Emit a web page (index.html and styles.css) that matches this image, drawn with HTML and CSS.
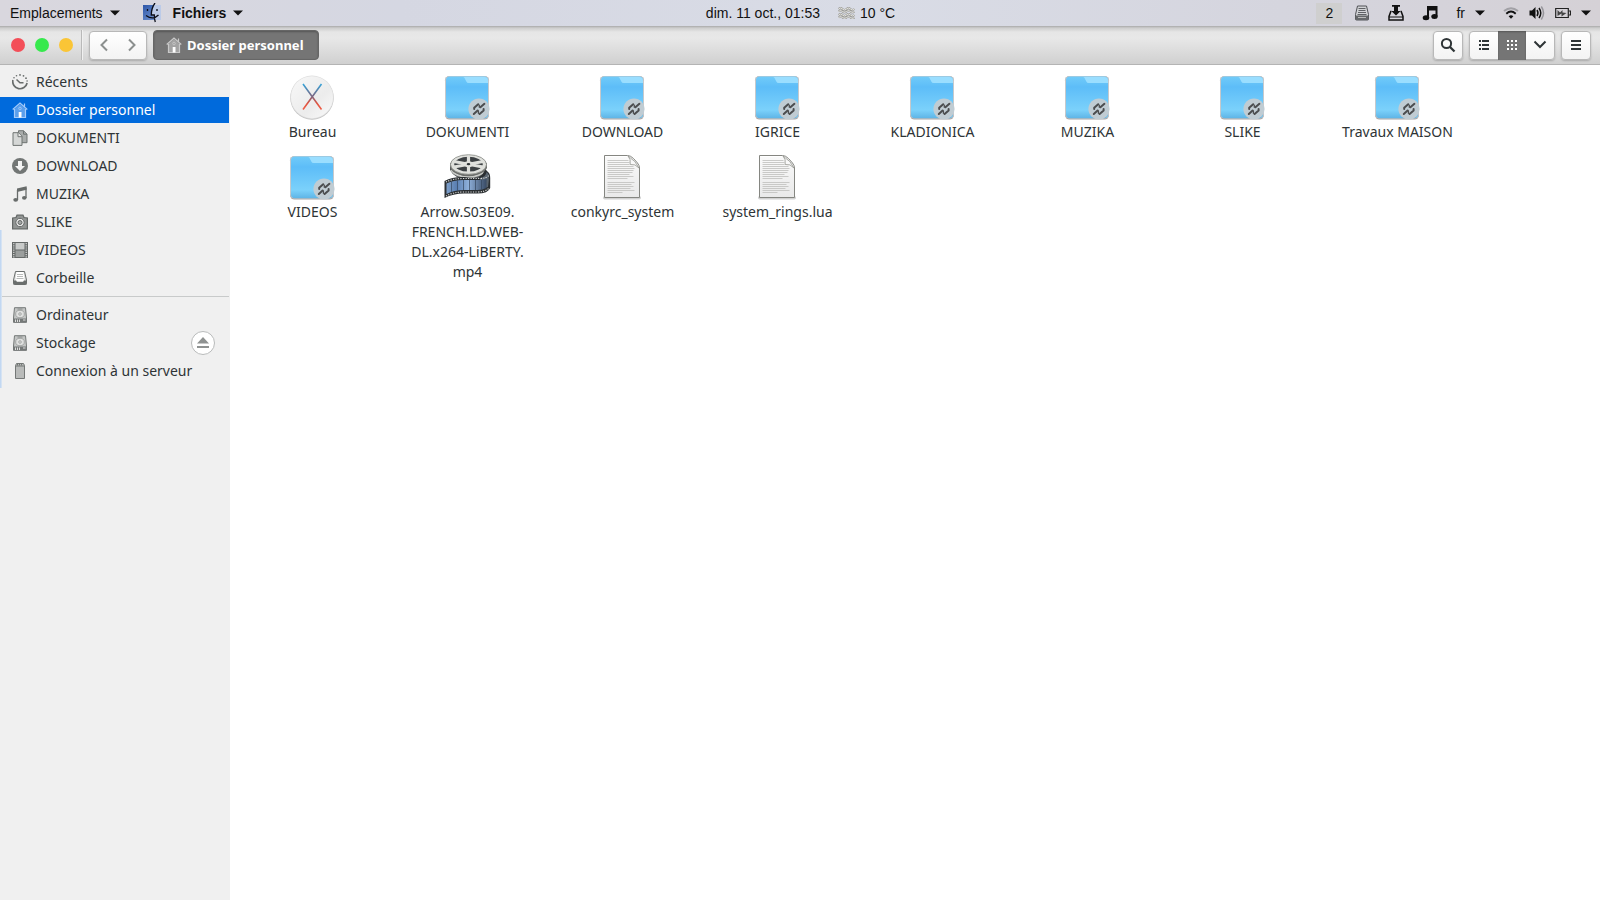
FILE: index.html
```
<!DOCTYPE html>
<html lang="fr">
<head>
<meta charset="utf-8">
<title>Dossier personnel</title>
<link rel="stylesheet" href="styles.css">
</head>
<body>
<svg class="defs" aria-hidden="true">
  <defs>
    <linearGradient id="g-folder" x1="0" y1="0" x2="0" y2="1">
      <stop offset="0" stop-color="#71cbf9"/><stop offset=".25" stop-color="#5dbdf8"/><stop offset=".8" stop-color="#7bd1fb"/><stop offset="1" stop-color="#5eb4e6"/>
    </linearGradient>
    <linearGradient id="g-x" gradientUnits="userSpaceOnUse" x1="0" y1="10" x2="0" y2="37">
      <stop offset="0" stop-color="#2fa8e0"/><stop offset=".5" stop-color="#7d6580"/><stop offset=".75" stop-color="#e0533f"/><stop offset="1" stop-color="#f0604a"/>
    </linearGradient>
    <linearGradient id="g-disc" x1="0" y1="0" x2="1" y2="1">
      <stop offset="0" stop-color="#f8f8f8"/><stop offset=".6" stop-color="#ececec"/><stop offset="1" stop-color="#fafafa"/>
    </linearGradient>
    <linearGradient id="g-page" x1="0" y1="0" x2="0" y2="1">
      <stop offset="0" stop-color="#fafafa"/><stop offset="1" stop-color="#e9e9e9"/>
    </linearGradient>
    <linearGradient id="g-film" x1="0" y1="0" x2="1" y2="0">
      <stop offset="0" stop-color="#7e9fc9"/><stop offset=".25" stop-color="#5a7fb2"/><stop offset=".55" stop-color="#8fb0da"/><stop offset="1" stop-color="#384a64"/>
    </linearGradient>
    <linearGradient id="g-finder" x1="0" y1="0" x2="1" y2="1">
      <stop offset="0" stop-color="#2c56a8"/><stop offset="1" stop-color="#7fa0d8"/>
    </linearGradient>
  </defs>
  <symbol id="i-folder" viewBox="0 0 48 48">
    <rect x="2" y="3" width="44" height="43.500" rx="4.500" fill="#a9a6a6"/>
    <rect x="2" y="3" width="44" height="42.500" rx="4.500" fill="#c6c9cc"/>
    <rect x="3" y="3.600" width="42" height="41.700" rx="3.800" fill="url(#g-folder)"/>
    <path d="M20 4h21.500a3.500 3.500 0 0 1 3.500 3.500V10H25.500q-1.500 0-2.200-1.500L21.500 5Q21 4 20 4z" fill="#9adeff"/>
    <circle cx="36" cy="36" r="10.600" fill="#c0ccd3"/>
    <g fill="none" stroke="#4b4d4f" stroke-width="2" stroke-linecap="round" stroke-linejoin="round">
      <path d="M31.200 36v-1.200l4-3.600M37.400 34.300l4-3.500M30.800 41l3.800-3.500M36.600 41l4-3.600V36"/>
      <path d="M36.300 32.200v2M35.400 38v2.300" stroke-width="1.300"/>
    </g>
  </symbol>
  <symbol id="i-desktop" viewBox="0 0 48 48">
    <circle cx="24" cy="25" r="21.700" fill="#c2c2c2"/>
    <circle cx="24" cy="24.200" r="21.700" fill="#dedede"/>
    <circle cx="24" cy="24.200" r="21" fill="url(#g-disc)"/>
    <path d="M15 11l18.500 25.500M33.500 11L15 36.500" stroke="url(#g-x)" stroke-width="1.600" fill="none"/>
  </symbol>
  <symbol id="i-page" viewBox="0 0 48 48">
    <rect x="5" y="43" width="38" height="3.500" rx="1.700" fill="#000" opacity=".18"/>
    <path d="M6.500 2.500h23q3 0 6 3l4 4.500q2 2.500 2 5V44.500h-35z" fill="url(#g-page)" stroke="#858681"/>
    <path d="M7.500 3.500h22" stroke="#fff"/>
    <path d="M9.500 7.500h21M9.500 9.500h22M9.500 11.500h22M9.500 13.500h26M9.500 15.500h27M9.500 17.500h26M9.500 19.500h25M9.500 21.500h22M9.500 23.500h26M9.500 25.500h20M9.500 29.500h27M9.500 31.500h24M9.500 33.500h26M9.500 35.500h23M9.500 37.500h27M9.500 39.500h15" stroke="#c4c4c2" stroke-width=".9"/>
    <path d="M30 3q3 3 2.200 8.500 5-1 8.800 3.500Q38 8 30 3z" fill="#f9f9f9" stroke="#94958f" stroke-width=".8"/>
  </symbol>
  <symbol id="i-film" viewBox="0 0 48 48">
    <path d="M7 10v7q5 10 20 9 9 0 14-4l3-8V10z" fill="#55585a"/>
    <path d="M8 17q5 7 18 7 10 0 17-7" fill="none" stroke="#c9cbc7" stroke-width="2"/>
    <path d="M36 24q5-3 6-8l4 4q1.500 2 1.200 8v7q-2 5.500-13 5.500H21q-11 0-19.500 4.500V28q8-4.500 20-4 15 2 14.500 0z" fill="#2b2f32"/>
    <path d="M37 25q6-1 6.500-6l2 2q1 6-.5 13l-8 2z" fill="#59646f"/>
    <path d="M3.500 30.500q7-3.500 17-3.500h18l5-1v9q-4 2-9 2H21q-10 0-17.500 4z" fill="url(#g-film)"/>
    <path d="M3 29q7-3.500 18-3.500h16q7 0 9-3.500M3 43q7-4 18-4h13q9 0 12-4" fill="none" stroke="#dcdddb" stroke-width="1.100" stroke-dasharray="1.200 1.300"/>
    <path d="M8.500 29v10M14.500 27.500v10.500M20.500 27v10M26.500 27v10M32.500 27v10M38.500 27v9.500" stroke="#34455c" stroke-width=".7"/>
    <ellipse cx="25.500" cy="12.700" rx="18.500" ry="10.500" fill="#6b6d6a"/>
    <ellipse cx="25.500" cy="11.500" rx="18" ry="9.800" fill="#dfe0dc" stroke="#888a85" stroke-width=".8"/>
    <ellipse cx="25.500" cy="11.200" rx="14.200" ry="7.400" fill="#3c4043"/>
    <path d="M11 8.500L40 14M40 8.500L11 14M25.500 3v17" stroke="#dfe0dc" stroke-width="3.200"/>
    <ellipse cx="25.500" cy="11.200" rx="5" ry="3" fill="#dfe0dc"/>
    <ellipse cx="25.500" cy="11.200" rx="1.800" ry="1.100" fill="#2d3133"/>
  </symbol>
  <symbol id="i-home" viewBox="0 0 16 16">
    <path d="M2.500 7v8.500h11V7L8 2z" fill="currentColor" opacity=".55"/>
    <path d="M.7 7.500L8 1l7.300 6.500M12.500 4.500V1.500M2.500 7v8.500h11V7" fill="none" stroke="currentColor" stroke-width="1.200"/>
    <circle cx="8" cy="6.500" r="1.300" fill="none" stroke="currentColor" stroke-width=".8"/>
    <path d="M6.700 10h2.800v5.500H6.700z" fill="#fff"/>
  </symbol>
  <symbol id="i-recent" viewBox="0 0 16 16">
    <path d="M.9 6A7.200 7.200 0 1 0 15.100 9" fill="none" stroke="currentColor" stroke-width="1.700"/>
    <path d="M4.500 5.500L8 8.700h3.500" fill="none" stroke="currentColor" stroke-width="1.500"/>
    <g fill="currentColor"><circle cx="4.500" cy="1.800" r=".8"/><circle cx="8" cy=".9" r=".9"/><circle cx="11.500" cy="1.800" r=".9"/><circle cx="14" cy="4.200" r=".9"/><circle cx="15.100" cy="7" r=".8"/><circle cx="2" cy="3.800" r=".8"/></g>
  </symbol>
  <symbol id="i-docs" viewBox="0 0 16 16">
    <path d="M6.500.7h5l3.500 3.500v8.500H6.500z" fill="#a9acab" stroke="#6f7473"/>
    <path d="M11.500.7v3.500H15" fill="none" stroke="#6f7473"/>
    <path d="M1 2.700h5.500L10 6.200v9.200H1z" fill="#d5d7d6" stroke="#6f7473"/>
    <path d="M6 2.700v4h4" fill="#eee" stroke="#6f7473"/>
  </symbol>
  <symbol id="i-down" viewBox="0 0 16 16">
    <circle cx="8" cy="8" r="8" fill="#727675"/>
    <path d="M6 3h4v5h3l-5 5-5-5h3z" fill="#f3f3f3"/>
  </symbol>
  <symbol id="i-note" viewBox="0 0 16 16">
    <path d="M5.500 14V4.500L14 2.300V12" fill="none" stroke="currentColor" stroke-width="1.300"/>
    <path d="M5 2.600L14.600.3v3.500L5 6z" fill="currentColor"/>
    <ellipse cx="3.700" cy="13.800" rx="2.400" ry="1.900" fill="currentColor"/><ellipse cx="12.300" cy="11.800" rx="2.300" ry="1.900" fill="currentColor"/>
  </symbol>
  <symbol id="i-camera" viewBox="0 0 16 16">
    <path d="M.6 4l3.400-.5 1-2.300h6l1 2.300 3.400.5v10.800H.6z" fill="#929594" stroke="#636766" stroke-width="1.200"/>
    <circle cx="8" cy="8.500" r="4.200" fill="#e8e8e8" stroke="#636766"/>
    <circle cx="8" cy="8.500" r="2" fill="#a4a7a6" stroke="#636766"/>
  </symbol>
  <symbol id="i-strip" viewBox="0 0 16 16">
    <path d="M0 0h16v16H0z" fill="#656968"/>
    <path d="M3.500 1h9v6.500h-9z" fill="#c9cbca"/><path d="M3.500 8.500h9V15h-9z" fill="#9b9e9d"/>
    <path d="M1.800 1v15M14.200 1v15" stroke="#ddd" stroke-width="1.200" stroke-dasharray="1.200 1"/>
  </symbol>
  <symbol id="i-tray" viewBox="0 0 16 16">
    <path d="M3.500 1.500h9l2 8.500v3.500q0 1-1 1h-11q-1 0-1-1V10z" fill="#dcdddc" stroke="#6a6e6d"/>
    <path d="M1.500 10.500h2.500l1 1.500h6l1-1.500h2.500v4h-13z" fill="#6a6e6d"/>
    <path d="M4.500 2h7l1 7.500-1.500 1.500H5L3.500 9.500z" fill="#fff"/>
    <path d="M5 4.500h6M5 6.500h6M4.500 8.500h7" stroke="#b9bbba"/>
  </symbol>
  <symbol id="i-disk" viewBox="0 0 16 16">
    <path d="M2.500.7h11L14.500 11v4.300h-13V11z" fill="#c4c6c5" stroke="#757978"/>
    <path d="M1.500 11.500h13v4h-13z" fill="#757978"/>
    <path d="M3.500 12.500v2.500M5.500 12.500v2.500M7.500 12.500v2.500M11 13h2.500" stroke="#ddd"/>
    <ellipse cx="8" cy="7" rx="4.300" ry="3.700" fill="#dfe0df" stroke="#999c9b" stroke-width=".8"/>
    <circle cx="8" cy="7" r="1.300" fill="none" stroke="#999c9b" stroke-width=".8"/><path d="M5.500 2h5" stroke="#858988"/>
  </symbol>
  <symbol id="i-server" viewBox="0 0 16 16">
    <path d="M3.500 2.500l1-2h7l1 2v13h-9z" fill="#b9bbba" stroke="#747877"/>
    <path d="M3.500 3h9M5.500 1v1.500M7.500 1v1.500M9.500 1v1.500" stroke="#747877"/>
  </symbol>
  <symbol id="i-caret" viewBox="0 0 10 6"><path d="M0 .5h10L5 5.500z" fill="currentColor"/></symbol>
</svg>

<header class="panel">
  <nav class="panel-left">
    <button class="panel-item">Emplacements <svg class="caret"><use href="#i-caret"/></svg></button>
    <button class="panel-item panel-app">
      <svg class="finder" viewBox="0 0 20 20"><path d="M1 2h18v15H1z" fill="url(#g-finder)"/><path d="M11.500 2H19v15h-6.500q-.7-2-.8-4.500H9.500Q9.800 7 11.500 2z" fill="#bccbe8"/><path d="M13 0Q9.300 5 9.300 12h3q0 4 1 7M4 12.500q7 5 12.500-.5M5.500 6v2M15 6v2" fill="none" stroke="#0a0d18" stroke-width="1.300"/></svg>
      Fichiers <svg class="caret"><use href="#i-caret"/></svg></button>
  </nav>
  <div class="panel-center">
    <button class="panel-item">dim. 11 oct., 01:53</button>
    <button class="panel-item weather"><svg class="fog" viewBox="0 0 16 12"><path d="M0 2q2-2 4 0t4 0 4 0 4 0M0 4.500q2-2 4 0t4 0 4 0 4 0M0 8q2-2 4 0t4 0 4 0 4 0M0 10.500q2-2 4 0t4 0 4 0 4 0" fill="none" stroke="#9b9b98" stroke-width="1.800"/><path d="M0 2q2-2 4 0t4 0 4 0 4 0M0 4.500q2-2 4 0t4 0 4 0 4 0M0 8q2-2 4 0t4 0 4 0 4 0M0 10.500q2-2 4 0t4 0 4 0 4 0" fill="none" stroke="#f0f0ea" stroke-width=".8"/></svg> 10 °C</button>
  </div>
  <div class="panel-right">
    <button class="panel-item workspace">2</button>
    <button class="panel-item" aria-label="Disque"><svg class="ic" viewBox="0 0 16 16"><path d="M3.500 1h9l2 8.500v4.500q0 1-1 1h-11q-1 0-1-1V9.500z" fill="#d2d3d6" stroke="#505256"/><path d="M1.500 10.500h13v4.500h-13z" fill="#66686b"/><path d="M4.500 3.500h7M4.500 5.500h7M4 7.500h8M3.500 9.500h9" stroke="#606266"/><path d="M4 12.500h8" stroke="#bbb"/></svg></button>
    <button class="panel-item" aria-label="Téléchargements"><svg class="ic" viewBox="0 0 16 16"><path d="M3.500 6.500H2.800L1 11.500V15h14v-3.500l-1.800-5h-.7" fill="none" stroke="#111" stroke-width="1.500"/><path d="M4 0h8v1.800h-2V6h2.700L8 10.500 3.300 6H6V1.800H4z" fill="#111"/><path d="M1 12h14" stroke="#111"/></svg></button>
    <button class="panel-item" aria-label="Musique"><svg class="ic" viewBox="0 0 16 16"><path d="M5 1h10.500v10.500h-2V5.500H7V13H5z" fill="#111"/><ellipse cx="4" cy="12.800" rx="3.300" ry="2.500" fill="#111"/><ellipse cx="12.500" cy="11.600" rx="3.200" ry="2.500" fill="#111"/></svg></button>
    <button class="panel-item lang">fr <svg class="caret"><use href="#i-caret"/></svg></button>
    <button class="panel-item system" aria-label="Système">
      <svg class="ic" viewBox="0 0 16 16"><path d="M1 6Q8 .5 15 6" fill="none" stroke="#a2a1a6" stroke-width="2"/><path d="M3.300 8.700Q8 4.500 12.700 8.700" fill="none" stroke="#111" stroke-width="1.900"/><path d="M5.600 11.300Q8 9 10.400 11.300L8 13.800z" fill="#111"/></svg>
      <svg class="ic" viewBox="0 0 16 16"><path d="M.5 5.500H3L6.500 2v12L3 10.500H.500z" fill="#111"/><path d="M8 5q2 3 0 6M10 3q3.500 5 0 10" fill="none" stroke="#111" stroke-width="1.500"/><path d="M12.300 1.500q4.500 6.500 0 13" fill="none" stroke="#96959a" stroke-width="1.500"/></svg>
      <svg class="ic" viewBox="0 0 16 16"><path d="M.7 3.500h12.600v9H.7zM14 6h1.500v4H14" fill="none" stroke="#222" stroke-width="1.200"/><path d="M2.500 5v6l4-2.500v3L11.500 8 7.500 7.500V5L5 7.500z" fill="#444"/></svg>
      <svg class="caret"><use href="#i-caret"/></svg>
    </button>
  </div>
</header>

<div class="toolbar">
  <div class="lights">
    <button class="light red" aria-label="Fermer"></button>
    <button class="light green" aria-label="Agrandir"></button>
    <button class="light yellow" aria-label="Réduire"></button>
  </div>
  <div class="group nav">
    <button class="btn" aria-label="Précédent"><svg class="ic" viewBox="0 0 16 16"><path d="M11 2.500L5.500 8l5.500 5.500" fill="none" stroke="#8b8f8e" stroke-width="2"/></svg></button>
    <button class="btn" aria-label="Suivant"><svg class="ic" viewBox="0 0 16 16"><path d="M5 2.500L10.500 8 5 13.500" fill="none" stroke="#8b8f8e" stroke-width="2"/></svg></button>
  </div>
  <button class="path"><svg class="ic"><use href="#i-home"/></svg>Dossier personnel</button>
  <div class="tools">
    <div class="group"><button class="btn" aria-label="Rechercher"><svg class="ic" viewBox="0 0 16 16"><circle cx="6.500" cy="6.500" r="4.600" fill="none" stroke="#2e3436" stroke-width="2"/><path d="M10 10l4.500 4.500" stroke="#2e3436" stroke-width="2.300"/></svg></button></div>
    <div class="group">
      <button class="btn" aria-label="Liste"><svg class="ic" viewBox="0 0 16 16"><path d="M3 4h2M6 4h7M3 8h2M6 8h7M3 12h2M6 12h7" stroke="#2e3436" stroke-width="2"/></svg></button>
      <button class="btn on" aria-label="Icônes"><svg class="ic" viewBox="0 0 16 16"><path d="M3 4h2M7 4h2M11 4h2M3 8h2M7 8h2M11 8h2M3 12h2M7 12h2M11 12h2" stroke="#fff" stroke-width="2"/></svg></button>
      <button class="btn" aria-label="Options d'affichage"><svg class="ic" viewBox="0 0 16 16"><path d="M2.500 4.500L8 10l5.500-5.500" fill="none" stroke="#2e3436" stroke-width="2"/></svg></button>
    </div>
    <div class="group"><button class="btn" aria-label="Menu"><svg class="ic" viewBox="0 0 16 16"><path d="M3 4h10M3 8h10M3 12h10" stroke="#2e3436" stroke-width="2"/></svg></button></div>
  </div>
</div>

<div class="window">
  <aside class="sidebar">
    <nav class="places">
      <a class="place" href="#recents"><svg class="ic"><use href="#i-recent"/></svg>Récents</a>
      <a class="place current" href="#home"><svg class="ic"><use href="#i-home"/></svg>Dossier personnel</a>
      <a class="place" href="#dokumenti"><svg class="ic"><use href="#i-docs"/></svg>DOKUMENTI</a>
      <a class="place" href="#download"><svg class="ic"><use href="#i-down"/></svg>DOWNLOAD</a>
      <a class="place" href="#muzika"><svg class="ic"><use href="#i-note"/></svg>MUZIKA</a>
      <a class="place" href="#slike"><svg class="ic"><use href="#i-camera"/></svg>SLIKE</a>
      <a class="place" href="#videos"><svg class="ic"><use href="#i-strip"/></svg>VIDEOS</a>
      <a class="place" href="#corbeille"><svg class="ic"><use href="#i-tray"/></svg>Corbeille</a>
    </nav>
    <nav class="places devices">
      <a class="place" href="#ordinateur"><svg class="ic"><use href="#i-disk"/></svg>Ordinateur</a>
      <div class="device-row">
        <a class="place" href="#stockage"><svg class="ic"><use href="#i-disk"/></svg>Stockage</a>
        <button class="eject" aria-label="Éjecter"><svg class="ic" viewBox="0 0 16 16"><path d="M8 2l6 6.500H2zM2 11h12v2H2z" fill="#8f9291"/></svg></button>
      </div>
      <a class="place" href="#serveur"><svg class="ic"><use href="#i-server"/></svg>Connexion à un serveur</a>
    </nav>
  </aside>
  <main class="files">
    <a class="file" href="#f1"><svg class="big"><use href="#i-desktop"/></svg><span>Bureau</span></a>
    <a class="file" href="#f2"><svg class="big"><use href="#i-folder"/></svg><span>DOKUMENTI</span></a>
    <a class="file" href="#f3"><svg class="big"><use href="#i-folder"/></svg><span>DOWNLOAD</span></a>
    <a class="file" href="#f4"><svg class="big"><use href="#i-folder"/></svg><span>IGRICE</span></a>
    <a class="file" href="#f5"><svg class="big"><use href="#i-folder"/></svg><span>KLADIONICA</span></a>
    <a class="file" href="#f6"><svg class="big"><use href="#i-folder"/></svg><span>MUZIKA</span></a>
    <a class="file" href="#f7"><svg class="big"><use href="#i-folder"/></svg><span>SLIKE</span></a>
    <a class="file" href="#f8"><svg class="big"><use href="#i-folder"/></svg><span>Travaux MAISON</span></a>
    <a class="file" href="#f9"><svg class="big"><use href="#i-folder"/></svg><span>VIDEOS</span></a>
    <a class="file" href="#f10"><svg class="big"><use href="#i-film"/></svg><span>Arrow.S03E09.<br>FRENCH.LD.WEB-<br>DL.x264-LiBERTY.<br>mp4</span></a>
    <a class="file" href="#f11"><svg class="big"><use href="#i-page"/></svg><span>conkyrc_system</span></a>
    <a class="file" href="#f12"><svg class="big"><use href="#i-page"/></svg><span>system_rings.lua</span></a>
  </main>
</div>
</body>
</html>
```
FILE: styles.css
```
* { box-sizing: border-box; }

body {
  margin: 0;
  min-height: 100vh;
  display: flex;
  flex-direction: column;
  font: 14px/20px "Noto Sans", sans-serif;
  color: #2e3436;
  background: #fff;
}

button { font: inherit; color: inherit; border: 0; padding: 0; background: none; }
a { color: inherit; text-decoration: none; }
svg { display: block; flex: none; }
.defs { position: absolute; width: 0; height: 0; }
.ic { width: 16px; height: 16px; }
.caret { width: 10px; height: 6px; }

/* Top panel */
.panel {
  display: grid;
  grid-template-columns: 1fr auto 1fr;
  height: 26px;
  padding: 0 9px 0 10px;
  font: 14px/24px "Liberation Sans", Arial, sans-serif;
  color: #111;
  background: linear-gradient(90deg, #d9d7de, #d5d7e2 25%, #d9dce6 55%, #d5d5de 80%, #d5d1d6);
}
.panel-left, .panel-center, .panel-right { display: flex; align-items: center; }
.panel-right { justify-content: flex-end; gap: 18px; }
.panel-item { display: flex; align-items: center; gap: 7px; white-space: nowrap; }
.panel-left { gap: 22px; }
.panel-app { font-weight: bold; }
.finder { width: 20px; height: 20px; margin-right: 4px; }
.panel-center { gap: 18px; }
.weather { gap: 5px; }
.fog { width: 17px; height: 12px; }
.workspace { width: 26px; height: 21px; justify-content: center; background: #cfcfcf; margin-right: -6px; }
.lang { gap: 10px; }
.system { gap: 10px; }

/* Header bar */
.toolbar {
  display: flex;
  align-items: center;
  height: 39px;
  padding: 0 9px 0 11px;
  border-bottom: 1px solid #b4b4b4;
  background: linear-gradient(#a9a9a9, #cdcdcd 2px, #e6e6e6 6px, #e8e8e8 12px, #d0d0d0);
}
.lights {
  display: flex;
  gap: 10px;
  padding: 8px 8px 8px 0;
  border-right: 1px solid #b9b9b9;
  box-shadow: 1px 0 #f0f0f0;
  margin-right: 7px;
}
.light { width: 14px; height: 14px; border-radius: 50%; }
.red { background: #f34e58; }
.green { background: #36e94d; }
.yellow { background: #fac536; }
.group {
  display: flex;
  height: 29px;
  border: 1px solid #b8b8b8;
  border-radius: 4px;
  background: linear-gradient(#fff, #f3f3f3);
  box-shadow: 0 1px 2px rgba(0, 0, 0, .2);
}
.btn { width: 28px; display: flex; align-items: center; justify-content: center; }
.btn.on { margin: -1px 0; background: #757575; box-shadow: inset 0 1px 2px #555; }
.path {
  display: flex;
  align-items: center;
  gap: 5px;
  height: 30px;
  margin-left: 6px;
  padding: 0 14px 0 12px;
  border: 1px solid #666;
  border-radius: 4px;
  background: #757575;
  box-shadow: inset 0 1px 2px #555;
  color: #fff;
  font-size: 13px;
  font-weight: bold;
  white-space: nowrap;
}
.path .ic { color: #c9c9c9; }
.tools { display: flex; gap: 6px; margin-left: auto; }

/* Window body */
.window { flex: 1; display: flex; }
.sidebar { position: relative; width: 230px; padding: 4px 1px 0 0; background: #f0f0f0; }
.sidebar::before {
  content: "";
  position: absolute;
  left: 0;
  top: 165px;
  width: 2px;
  height: 158px;
  background: linear-gradient(90deg, #b9d3f2, #dfe8f3);
}
.places { display: flow-root; }
.devices { margin-top: 3px; padding-top: 5px; border-top: 1px solid #c8caca; }
.place {
  display: flex;
  flex: 1;
  align-items: center;
  gap: 8px;
  height: 26px;
  margin-bottom: 2px;
  padding-left: 12px;
}
.place .ic { color: #686c6b; }
.current { background: #006adc; color: #fff; }
.current .ic { color: #a4cbfa; }
.device-row { display: flex; align-items: center; padding-right: 14px; }
.eject {
  display: flex;
  align-items: center;
  justify-content: center;
  width: 24px;
  height: 24px;
  margin-bottom: 2px;
  border: 1px solid #b9bbbb;
  border-radius: 50%;
  background: #fff;
}

/* Icon view */
.files {
  flex: 1;
  display: grid;
  grid-template-columns: repeat(auto-fill, 155px);
  align-content: start;
  row-gap: 11px;
  padding: 8px 5px;
}
.file { display: flex; flex-direction: column; align-items: center; gap: 1px; text-align: center; }
.big { width: 48px; height: 48px; margin-right: 1px; }
```
